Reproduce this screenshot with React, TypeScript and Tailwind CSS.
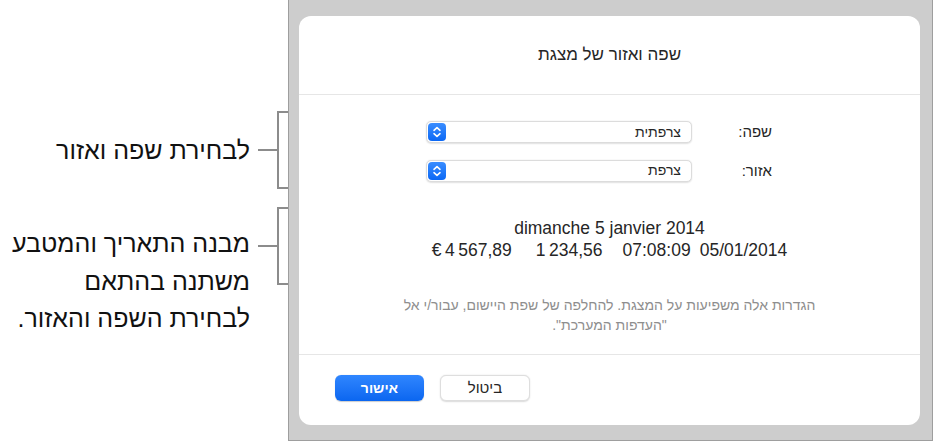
import React from "react"

const font = "font-['Liberation_Sans','DejaVu_Sans',sans-serif]"

function Stepper() {
  return (
    <svg width="18" height="18" viewBox="0 0 18 18" className="shrink-0">
      <defs>
        <linearGradient id="stepGrad" x1="0" y1="0" x2="0" y2="1">
          <stop offset="0" stopColor="#3a8dff" />
          <stop offset="1" stopColor="#0b68f5" />
        </linearGradient>
      </defs>
      <rect x="0" y="0" width="18" height="18" rx="4" fill="url(#stepGrad)" />
      <path d="M6 7.3 L9 4.6 L12 7.3" fill="none" stroke="#fff" strokeWidth="1.6" strokeLinecap="round" strokeLinejoin="round" />
      <path d="M6 10.7 L9 13.4 L12 10.7" fill="none" stroke="#fff" strokeWidth="1.6" strokeLinecap="round" strokeLinejoin="round" />
    </svg>
  )
}

function PopupRow({ label, value }: { label: string; value: string }) {
  return (
    <div className="flex items-center gap-[46px]">
      <span className="w-[34px] text-right text-[15px] text-[#262626]">{label}</span>
      <div className="flex h-[22px] w-[266px] items-center justify-between rounded-[5px] border border-[#dcdcdc] bg-white pl-[1px] pr-[10px] shadow-[0_0.5px_1.5px_rgba(0,0,0,0.12)]">
        <span className="text-[14px] text-[#262626]">{value}</span>
        <Stepper />
      </div>
    </div>
  )
}

// tick + bracket, opening to the right
function Bracket({ height }: { height: number }) {
  return (
    <div className="flex shrink-0 items-center">
      <div className="h-[2px] w-[19px] bg-[#8c8c8c]" />
      <div className="w-[11px] border-y-2 border-l-2 border-[#8c8c8c]" style={{ height }} />
    </div>
  )
}

export default function App() {
  return (
    <div className={`flex h-[443px] w-[935px] overflow-hidden bg-white ${font}`}>
      {/* callouts */}
      <div className="flex w-[288px] shrink-0 flex-col pl-[2px] pt-[111px]">
        <div className="flex items-center">
          <p className="mr-[8px] flex-1 text-right text-[25px] leading-[37px] text-[#111]" dir="rtl">
            לבחירת שפה ואזור
          </p>
          <Bracket height={78} />
        </div>
        <div className="mt-[18px] flex items-start">
          <p className="mr-[8px] mt-[18px] flex-1 whitespace-nowrap text-right text-[25px] leading-[37.5px] text-[#111]" dir="rtl">
            מבנה התאריך והמטבע
            <br />
            משתנה בהתאם
            <br />
            לבחירת השפה והאזור.
          </p>
          <div className="flex h-[78px] items-center">
            <Bracket height={78} />
          </div>
        </div>
      </div>

      {/* window frame */}
      <div className="h-[441px] w-[645px] shrink-0 border-x border-b border-[#9e9e9e] bg-[#cdcdcd] pl-[10px] pr-[12px] pt-[16px]">
        <div className="flex h-[409px] flex-col rounded-[12px] bg-white" dir="rtl">
          <div className="flex h-[79px] items-center justify-center border-b border-[#e6e6e6]">
            <h1 className="text-[17px] text-[#262626]">שפה ואזור של מצגת</h1>
          </div>

          <div className="flex flex-col pt-[26px]">
            <div className="flex flex-col gap-[16px] pr-[148px]">
              <PopupRow label="שפה:" value="צרפתית" />
              <PopupRow label="אזור:" value="צרפת" />
            </div>

            <div className="mt-[35px] flex flex-col items-center text-[17.5px] leading-[22px] text-[#262626]" dir="ltr">
              <span>dimanche 5 janvier 2014</span>
              <div className="flex">
                <span>€{"\u202F"}4{"\u202F"}567,89</span>
                <span className="ml-[24px]">1{"\u202F"}234,56</span>
                <span className="ml-[20px]">07:08:09</span>
                <span className="ml-[9px]">05/01/2014</span>
              </div>
            </div>

            <p className="mt-[34px] text-center text-[14px] leading-[20px] text-[#8e8e8e]">
              הגדרות אלה משפיעות על המצגת. להחלפה של שפת היישום, עבור/י אל
              <br />
              "העדפות המערכת".
            </p>
          </div>

          <div className="mt-auto flex h-[71px] items-start gap-[16px] border-t border-[#e6e6e6] pl-[36px] pt-[20px]" dir="ltr">
            <button className="h-[26px] w-[89px] rounded-[6px] bg-gradient-to-b from-[#2f86ff] to-[#0a66f0] text-[14px] font-bold text-white shadow-[0_0.5px_1px_rgba(0,0,0,0.2)]">
              אישור
            </button>
            <button className="h-[26px] w-[90px] rounded-[6px] border border-[#dedede] bg-white text-[15px] text-[#262626] shadow-[0_0.5px_1.5px_rgba(0,0,0,0.15)]">
              ביטול
            </button>
          </div>
        </div>
      </div>
    </div>
  )
}
